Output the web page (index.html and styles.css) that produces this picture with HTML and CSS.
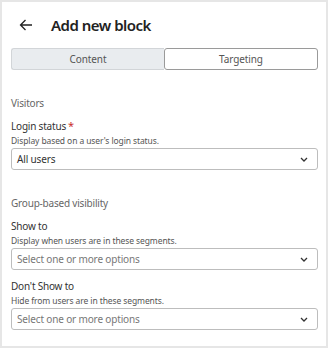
FILE: index.html
```html
<!DOCTYPE html>
<html>
<head>
<meta charset="utf-8">
<link rel="stylesheet" href="styles.css">
</head>
<body>
<div class="panel">
  <div class="header">
    <svg class="back" width="14" height="12" viewBox="0 0 14 12"><path d="M13 6H1.5M6.5 1L1.5 6l5 5" fill="none" stroke="#222" stroke-width="1.3"/></svg>
    <h1 class="title">Add new block</h1>
  </div>
  <div class="tabs">
    <div class="tab tab-inactive">Content</div>
    <div class="tab tab-active">Targeting</div>
  </div>

  <div class="section">
    <div class="section-title">Visitors</div>
    <div class="field">
      <div class="label">Login status<span class="req">*</span></div>
      <div class="desc">Display based on a user's login status.</div>
      <div class="select"><span class="value">All users</span><svg class="chev" width="8" height="5" viewBox="0 0 8 5"><path d="M1 1l3 3 3-3" fill="none" stroke="#333" stroke-width="1.3"/></svg></div>
    </div>
  </div>

  <div class="section">
    <div class="section-title">Group-based visibility</div>
    <div class="field">
      <div class="label">Show to</div>
      <div class="desc">Display when users are in these segments.</div>
      <div class="select"><span class="placeholder">Select one or more options</span><svg class="chev" width="8" height="5" viewBox="0 0 8 5"><path d="M1 1l3 3 3-3" fill="none" stroke="#333" stroke-width="1.3"/></svg></div>
    </div>
    <div class="field field-gap">
      <div class="label">Don't Show to</div>
      <div class="desc">Hide from users are in these segments.</div>
      <div class="select"><span class="placeholder">Select one or more options</span><svg class="chev" width="8" height="5" viewBox="0 0 8 5"><path d="M1 1l3 3 3-3" fill="none" stroke="#333" stroke-width="1.3"/></svg></div>
    </div>
  </div>
</div>
</body>
</html>
```
FILE: styles.css
```css
* { box-sizing: border-box; }
body {
  margin: 0;
  background: #fff;
  font-family: "Noto Sans", "Open Sans", sans-serif;
  color: #333;
}
.panel {
  width: 328px;
  height: 348px;
  border: 2px solid #e6e6e6;
  padding: 0 8px 0 9px;
  background: #fff;
}
.header {
  height: 46px;
  display: flex;
  align-items: center;
}
.back {
  margin-left: 8px;
  margin-right: 18px;
}
.title {
  margin: 0;
  font-size: 15px;
  font-weight: 600;
  letter-spacing: -0.5px;
  color: #222;
}
.tabs {
  display: flex;
  height: 22px;
}
.tab {
  flex: 1;
  display: flex;
  align-items: center;
  justify-content: center;
  font-size: 10px;
  letter-spacing: -0.1px;
  color: #555;
  border-radius: 3px;
}
.tab-inactive {
  background: #e9ecef;
  border: 1px solid #d2d5d8;
  border-right: none;
  border-radius: 3px 0 0 3px;
}
.tab-active {
  background: #fff;
  border: 1px solid #9a9a9a;
}
.section {
  padding-top: 25px;
}
.section-title {
  font-size: 10px;
  letter-spacing: -0.2px;
  line-height: 16px;
  color: #666;
  margin-bottom: 7px;
}
.label {
  font-size: 10px;
  letter-spacing: -0.2px;
  line-height: 16px;
  color: #333;
}
.req {
  color: #c9302c;
  margin-left: 2px;
  font-size: 11px;
}
.desc {
  font-size: 8.5px;
  letter-spacing: -0.1px;
  line-height: 13px;
  color: #555;
  margin-bottom: 1px;
}
.select {
  height: 22px;
  border: 1px solid #bdbdbd;
  border-radius: 3px;
  display: flex;
  align-items: center;
  justify-content: space-between;
  padding: 0 9px 0 5px;
  font-size: 10px;
  letter-spacing: -0.15px;
}
.value { color: #333; }
.placeholder { color: #777; }
.field-gap { margin-top: 8px; }
```
